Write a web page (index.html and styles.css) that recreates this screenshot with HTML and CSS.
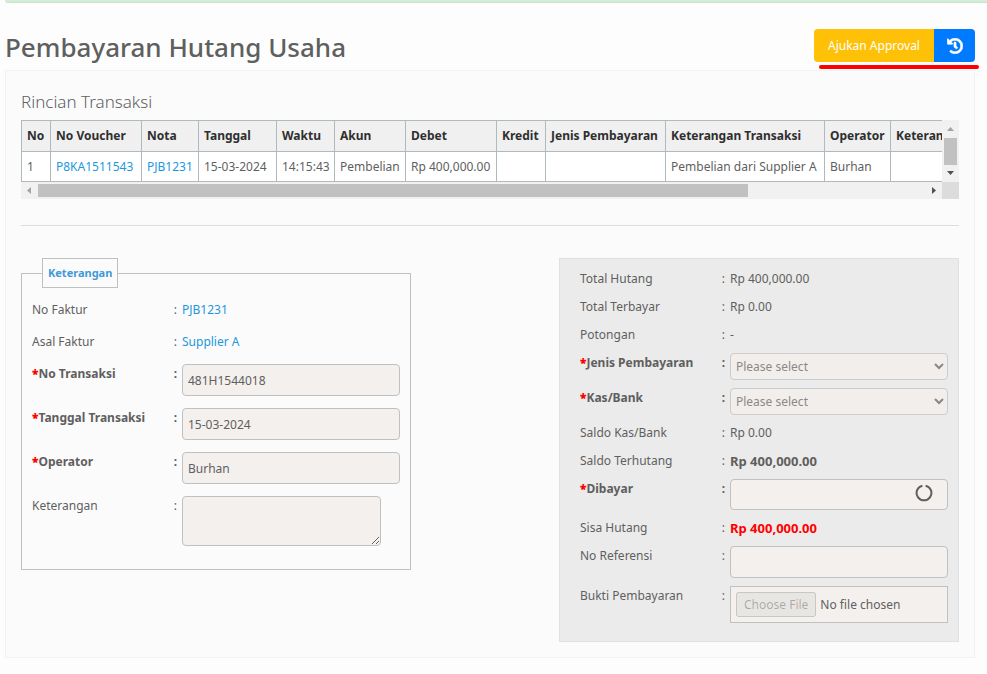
FILE: index.html
```html
<!DOCTYPE html>
<html lang="id">
<head>
  <meta charset="UTF-8" />
  <meta name="viewport" content="width=device-width, initial-scale=1.0"/>
  <title>Pembayaran Hutang Usaha</title>
  <link rel="stylesheet" href="styles.css">
</head>
<body>

  <div class="alert"></div>

  <div class="page">
    <header class="page-header">
      <h1>Pembayaran Hutang Usaha</h1>
      <div class="btn-group">
        <button type="button" class="btn btn-warning">Ajukan Approval</button>
        <button type="button" class="btn btn-primary" aria-label="Riwayat">
          <svg width="16" height="16" viewBox="0 0 512 512" fill="#fff" stroke="#fff" stroke-width="22"><path d="M504 255.531c.253 136.64-111.18 248.372-247.82 248.468-59.015.042-113.223-20.53-155.822-54.911-11.077-8.94-11.905-25.541-1.839-35.607l11.267-11.267c8.609-8.609 22.353-9.551 31.891-1.984C173.062 425.135 212.781 440 256 440c101.705 0 184-82.311 184-184 0-101.705-82.311-184-184-184-48.814 0-93.149 18.969-126.068 49.932l50.754 50.754c10.08 10.08 2.941 27.314-11.313 27.314H24c-8.837 0-16-7.163-16-16V38.627c0-14.254 17.234-21.393 27.314-11.314l49.372 49.372C129.209 34.136 189.552 8 256 8c136.81 0 247.747 110.78 248 247.531zm-180.912 78.784l9.823-12.63c8.138-10.463 6.253-25.542-4.21-33.679L288 256.349V152c0-13.255-10.745-24-24-24h-16c-13.255 0-24 10.745-24 24v135.651l65.409 50.874c10.463 8.137 25.541 6.253 33.679-4.21z"/></svg>
        </button>
        <span class="marker"></span>
      </div>
    </header>

    <main class="card">
      <h2>Rincian Transaksi</h2>

      <div class="table-box">
        <div class="table-view">
          <table>
            <colgroup>
              <col class="c-no"><col class="c-voucher"><col class="c-nota"><col class="c-tanggal">
              <col class="c-waktu"><col class="c-akun"><col class="c-debet"><col class="c-kredit">
              <col class="c-jenis"><col class="c-ket"><col class="c-operator"><col class="c-last">
            </colgroup>
            <thead>
              <tr>
                <th>No</th>
                <th>No Voucher</th>
                <th>Nota</th>
                <th>Tanggal</th>
                <th>Waktu</th>
                <th>Akun</th>
                <th>Debet</th>
                <th>Kredit</th>
                <th>Jenis Pembayaran</th>
                <th>Keterangan Transaksi</th>
                <th>Operator</th>
                <th>Keterangan</th>
              </tr>
            </thead>
            <tbody>
              <tr>
                <td>1</td>
                <td><a href="#">P8KA1511543</a></td>
                <td><a href="#">PJB1231</a></td>
                <td>15-03-2024</td>
                <td>14:15:43</td>
                <td>Pembelian</td>
                <td>Rp 400,000.00</td>
                <td></td>
                <td></td>
                <td>Pembelian dari Supplier A</td>
                <td>Burhan</td>
                <td></td>
              </tr>
            </tbody>
          </table>
        </div>
        <div class="scroll-y" aria-hidden="true">
          <svg width="7" height="4" viewBox="0 0 7 4" fill="#a3a3a3"><path d="M0 4L3.5 0L7 4z"/></svg>
          <div class="thumb-y"></div>
          <svg width="7" height="4" viewBox="0 0 7 4" fill="#505050"><path d="M0 0L3.5 4L7 0z"/></svg>
        </div>
        <div class="scroll-x" aria-hidden="true">
          <svg width="4" height="7" viewBox="0 0 4 7" fill="#a3a3a3"><path d="M4 0L0 3.5L4 7z"/></svg>
          <div class="track-x"><div class="thumb-x"></div></div>
          <svg width="4" height="7" viewBox="0 0 4 7" fill="#505050"><path d="M0 0L4 3.5L0 7z"/></svg>
        </div>
        <div class="scroll-corner"></div>
      </div>

      <hr>

      <form class="columns">
        <fieldset class="info">
          <legend>Keterangan</legend>
          <div class="row">
            <span class="label">No Faktur<i>:</i></span>
            <a href="#">PJB1231</a>
          </div>
          <div class="row">
            <span class="label">Asal Faktur<i>:</i></span>
            <a href="#">Supplier A</a>
          </div>
          <div class="row">
            <label class="label required" for="noTransaksi"><span><b>*</b>No Transaksi</span><i>:</i></label>
            <input type="text" id="noTransaksi" value="481H1544018" readonly>
          </div>
          <div class="row">
            <label class="label required" for="tanggal"><span><b>*</b>Tanggal Transaksi</span><i>:</i></label>
            <input type="text" id="tanggal" value="15-03-2024" readonly>
          </div>
          <div class="row">
            <label class="label required" for="operator"><span><b>*</b>Operator</span><i>:</i></label>
            <input type="text" id="operator" value="Burhan" readonly>
          </div>
          <div class="row">
            <label class="label" for="keterangan">Keterangan<i>:</i></label>
            <textarea id="keterangan" readonly></textarea>
          </div>
        </fieldset>

        <section class="payment">
          <div class="row">
            <span class="label">Total Hutang<i>:</i></span>
            <span>Rp 400,000.00</span>
          </div>
          <div class="row">
            <span class="label">Total Terbayar<i>:</i></span>
            <span>Rp 0.00</span>
          </div>
          <div class="row">
            <span class="label">Potongan<i>:</i></span>
            <span>-</span>
          </div>
          <div class="row">
            <label class="label required" for="jenis"><span><b>*</b>Jenis Pembayaran</span><i>:</i></label>
            <select id="jenis" disabled><option>Please select</option></select>
          </div>
          <div class="row">
            <label class="label required" for="kas"><span><b>*</b>Kas/Bank</span><i>:</i></label>
            <select id="kas" disabled><option>Please select</option></select>
          </div>
          <div class="row">
            <span class="label">Saldo Kas/Bank<i>:</i></span>
            <span>Rp 0.00</span>
          </div>
          <div class="row">
            <span class="label">Saldo Terhutang<i>:</i></span>
            <strong>Rp 400,000.00</strong>
          </div>
          <div class="row">
            <label class="label required" for="dibayar"><span><b>*</b>Dibayar</span><i>:</i></label>
            <div class="field">
              <input type="text" id="dibayar" readonly>
              <svg class="spinner" width="18" height="18" viewBox="0 0 18 18" fill="none" stroke="#5f5f5f" stroke-width="2"><path d="M10.6 1.7A7.4 7.4 0 1 1 7.4 1.7"/></svg>
            </div>
          </div>
          <div class="row">
            <span class="label">Sisa Hutang<i>:</i></span>
            <strong class="danger">Rp 400,000.00</strong>
          </div>
          <div class="row">
            <label class="label" for="referensi">No Referensi<i>:</i></label>
            <input type="text" id="referensi" readonly>
          </div>
          <div class="row">
            <label class="label" for="bukti">Bukti Pembayaran<i>:</i></label>
            <input type="file" id="bukti" disabled>
          </div>
        </section>
      </form>
    </main>
  </div>

</body>
</html>
```

FILE: styles.css
```css
* {
  box-sizing: border-box;
}

body {
  margin: 0;
  background: #fdfdfd;
  color: #5f5f5f;
  font-family: "Noto Sans", "Open Sans", sans-serif;
  font-size: 12px;
  line-height: 20px;
}

a {
  color: #1b98e0;
  text-decoration: none;
}

.alert {
  height: 3px;
  margin-left: 5px;
  background: #d4edda;
  border-bottom: 1px solid #c3e6cb;
  border-bottom-left-radius: 3px;
}

.page {
  padding: 26px 12px 17px 5px;
}

/* title and actions */
.page-header {
  display: flex;
  justify-content: space-between;
  align-items: flex-start;
  height: 41px;
}

h1 {
  margin: 0;
  font-size: 26px;
  font-weight: 500;
  line-height: 36px;
}

.btn-group {
  display: flex;
  position: relative;
}

.btn {
  height: 33px;
  border: none;
  color: #fff;
  font: inherit;
  cursor: pointer;
}

.btn-warning {
  width: 120px;
  padding: 0;
  background: #ffc107;
  border-radius: 4px 0 0 4px;
}

.btn-primary {
  display: flex;
  align-items: center;
  justify-content: center;
  width: 41px;
  padding: 0;
  background: #007bff;
  border-radius: 0 4px 4px 0;
}

.marker {
  position: absolute;
  top: 36px;
  left: 5px;
  right: -4px;
  height: 4px;
  background: #f00;
  border-radius: 2px;
}

.card {
  padding: 20px 15px 15px;
  background: #fbfbfb;
  border: 1px solid #f2f2f2;
}

h2 {
  margin: 0 0 7px;
  font-size: 17px;
  font-weight: 300;
  line-height: 22px;
}

/* transaction table */
.table-box {
  display: grid;
  grid-template-columns: minmax(0, 1fr) 17px;
}

.table-view {
  overflow: hidden;
}

table {
  width: 1153px;
  table-layout: fixed;
  border-collapse: collapse;
  background: #fff;
}

th,
td {
  height: 30px;
  padding: 0 5px;
  border: 1px solid #b0b9be;
  text-align: left;
  white-space: nowrap;
}

th {
  height: 31px;
  background: #f0f0f0;
  color: #2f2f2f;
  font-weight: 700;
}

.c-no { width: 29px; }
.c-voucher { width: 91px; }
.c-nota { width: 57px; }
.c-tanggal { width: 78px; }
.c-waktu { width: 58px; }
.c-akun { width: 71px; }
.c-debet { width: 91px; }
.c-kredit { width: 49px; }
.c-jenis { width: 120px; }
.c-ket { width: 159px; }
.c-operator { width: 66px; }

.scroll-y,
.scroll-x {
  display: flex;
  align-items: center;
  background: #f1f1f1;
}

.scroll-y {
  flex-direction: column;
  justify-content: space-between;
  padding: 7px 0;
}

.thumb-y {
  width: 13px;
  height: 27px;
  background: #c1c1c1;
}

.scroll-x {
  height: 17px;
  gap: 7px;
  padding: 0 6px;
}

.track-x {
  flex: 1;
}

.thumb-x {
  width: 80%;
  height: 13px;
  background: #c1c1c1;
}

.scroll-corner {
  background: #dcdcdc;
}

hr {
  margin: 26px 0 32px;
  border: none;
  border-top: 1px solid #dcdcdc;
}

/* form */
.columns {
  display: flex;
  justify-content: space-between;
  align-items: flex-start;
}

.row {
  display: flex;
  align-items: flex-start;
}

.label {
  display: flex;
  flex: none;
  justify-content: space-between;
  width: 150px;
  padding-right: 5px;
}

.label i {
  font-style: normal;
}

.required {
  font-weight: 700;
}

.required b,
.danger {
  color: #f00;
}

strong {
  font-size: 13px;
}

.info {
  width: 390px;
  margin: 0;
  padding: 12px 10px 23px;
  border: 1px solid #c0c0c0;
}

.info .row {
  margin-bottom: 12px;
}

.info .row:last-child {
  margin-bottom: 0;
}

legend {
  margin-left: 10px;
  padding: 4px 5px;
  border: 1px solid #c0c0c0;
  color: #3f9ad6;
  font-size: 11px;
  font-weight: 700;
}

.payment {
  display: flex;
  flex-direction: column;
  gap: 8px;
  width: 400px;
  padding: 10px 10px 18px 20px;
  background: #ebebeb;
  border: 1px solid #e0e0e0;
}

input,
select,
textarea {
  width: 218px;
  height: 32px;
  margin: 0;
  padding: 0 5px;
  background: #f4f0ed;
  border: 1px solid #c0c0c0;
  border-radius: 4px;
  color: #5f5f5f;
  font: inherit;
}

select {
  height: 27px;
  padding: 0 1px;
  opacity: 0.7;
}

textarea {
  width: 199px;
  height: 50px;
}

.field {
  position: relative;
  height: 31px;
}

.field input {
  height: 31px;
}

.spinner {
  position: absolute;
  top: 5px;
  right: 15px;
}

input[type="file"] {
  height: 37px;
  padding: 5px;
  border-radius: 0;
}

input[type="file"]::file-selector-button {
  height: 25px;
  font: inherit;
}
```
